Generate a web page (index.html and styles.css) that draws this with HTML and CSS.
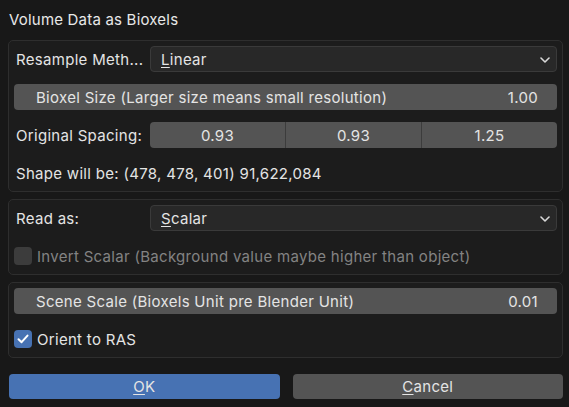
FILE: index.html
```html
<!DOCTYPE html>
<html>
<head>
<meta charset="utf-8">
<link rel="stylesheet" href="styles.css">
</head>
<body>
<div class="dialog">
  <div class="title">Volume Data as Bioxels</div>

  <div class="panel">
    <div class="row">
      <div class="label">Resample Meth...</div>
      <div class="dropdown"><span><u>L</u>inear</span>
        <svg class="chev" width="10" height="6" viewBox="0 0 10 6"><path d="M1 1 L5 5 L9 1" fill="none" stroke="#d8d8d8" stroke-width="1.6" stroke-linecap="round" stroke-linejoin="round"/></svg>
      </div>
    </div>
    <div class="row">
      <div class="slider"><span>Bioxel Size (Larger size means small resolution)</span><span>1.00</span></div>
    </div>
    <div class="row">
      <div class="label">Original Spacing:</div>
      <div class="multi"><div class="cell">0.93</div><div class="cell">0.93</div><div class="cell">1.25</div></div>
    </div>
    <div class="row">
      <div class="text">Shape will be: (478, 478, 401) 91,622,084</div>
    </div>
  </div>

  <div class="panel">
    <div class="row">
      <div class="label">Read as:</div>
      <div class="dropdown"><span><u>S</u>calar</span>
        <svg class="chev" width="10" height="6" viewBox="0 0 10 6"><path d="M1 1 L5 5 L9 1" fill="none" stroke="#d8d8d8" stroke-width="1.6" stroke-linecap="round" stroke-linejoin="round"/></svg>
      </div>
    </div>
    <div class="row">
      <div class="check disabled"><span class="box"></span><span>Invert Scalar (Background value maybe higher than object)</span></div>
    </div>
  </div>

  <div class="panel">
    <div class="row">
      <div class="slider"><span>Scene Scale (Bioxels Unit pre Blender Unit)</span><span>0.01</span></div>
    </div>
    <div class="row">
      <div class="check"><span class="box on"><svg width="12" height="10" viewBox="0 0 12 10"><path d="M1.5 5.2 L4.6 8.2 L10.5 1.6" fill="none" stroke="#ffffff" stroke-width="2" stroke-linecap="round" stroke-linejoin="round"/></svg></span><span>Orient to RAS</span></div>
    </div>
  </div>

  <div class="buttons">
    <div class="btn primary"><u>O</u>K</div>
    <div class="btn"><u>C</u>ancel</div>
  </div>
</div>
</body>
</html>
```
FILE: styles.css
```css
html, body {
  margin: 0;
  padding: 0;
  background: #181818;
}
body {
  font-family: Inter, "Noto Sans", sans-serif;
  font-size: 15px;
  letter-spacing: 0.3px;
  color: #e4e4e4;
  width: 569px;
  height: 407px;
  overflow: hidden;
}
.dialog {
  padding: 0 6px 0 8px;
  display: flex;
  flex-direction: column;
}
.title {
  height: 40px;
  line-height: 40px;
  padding-left: 1px;
  font-size: 15px;
  letter-spacing: 0.2px;
  color: #e8e8e8;
}
.panel {
  border: 1px solid #2e2e2e;
  border-radius: 5px;
  background: #1c1c1c;
  padding: 5px 5px 5px 5px;
  display: flex;
  flex-direction: column;
  gap: 12px;
  margin-bottom: 7px;
}
.row {
  height: 26px;
  display: flex;
  align-items: center;
}
.label {
  width: 134px;
  padding-left: 2px;
  flex: none;
  white-space: nowrap;
}
.dropdown {
  flex: 1;
  height: 24px;
  border: 1px solid #3a3a3a;
  border-radius: 4px;
  background: #282828;
  display: flex;
  align-items: center;
  justify-content: space-between;
  padding: 0 6px 0 10px;
}
.chev { margin-top: 1px; }
u {
  text-decoration: underline;
  text-underline-offset: 2px;
  text-decoration-thickness: 1px;
}
.slider {
  flex: 1;
  height: 26px;
  border-radius: 4px;
  background: #545454;
  display: flex;
  align-items: center;
  justify-content: space-between;
  padding: 0 19px 0 22px;
  box-sizing: border-box;
}
.multi {
  flex: 1;
  height: 26px;
  border-radius: 4px;
  background: #545454;
  display: flex;
  overflow: hidden;
}
.cell {
  flex: 1;
  display: flex;
  align-items: center;
  justify-content: center;
  border-left: 1px solid #3c3c3c;
}
.cell:first-child { border-left: none; }
.text {
  padding-left: 2px;
}
.check {
  display: flex;
  align-items: center;
  gap: 5px;
  padding-left: 0;
}
.box {
  width: 18px;
  height: 18px;
  border-radius: 4px;
  background: #545454;
  display: flex;
  align-items: center;
  justify-content: center;
}
.box.on { background: #4772b3; }
.check.disabled { color: #838383; }
.check.disabled .box { background: #3c3c3c; }
.buttons {
  display: flex;
  gap: 13px;
  margin-top: 9px;
}
.btn {
  flex: 1;
  height: 25px;
  border-radius: 4px;
  background: #545454;
  display: flex;
  align-items: center;
  justify-content: center;
  color: #e4e4e4;
}
.btn.primary {
  background: #4772b3;
  margin-left: 1px;
}
```
